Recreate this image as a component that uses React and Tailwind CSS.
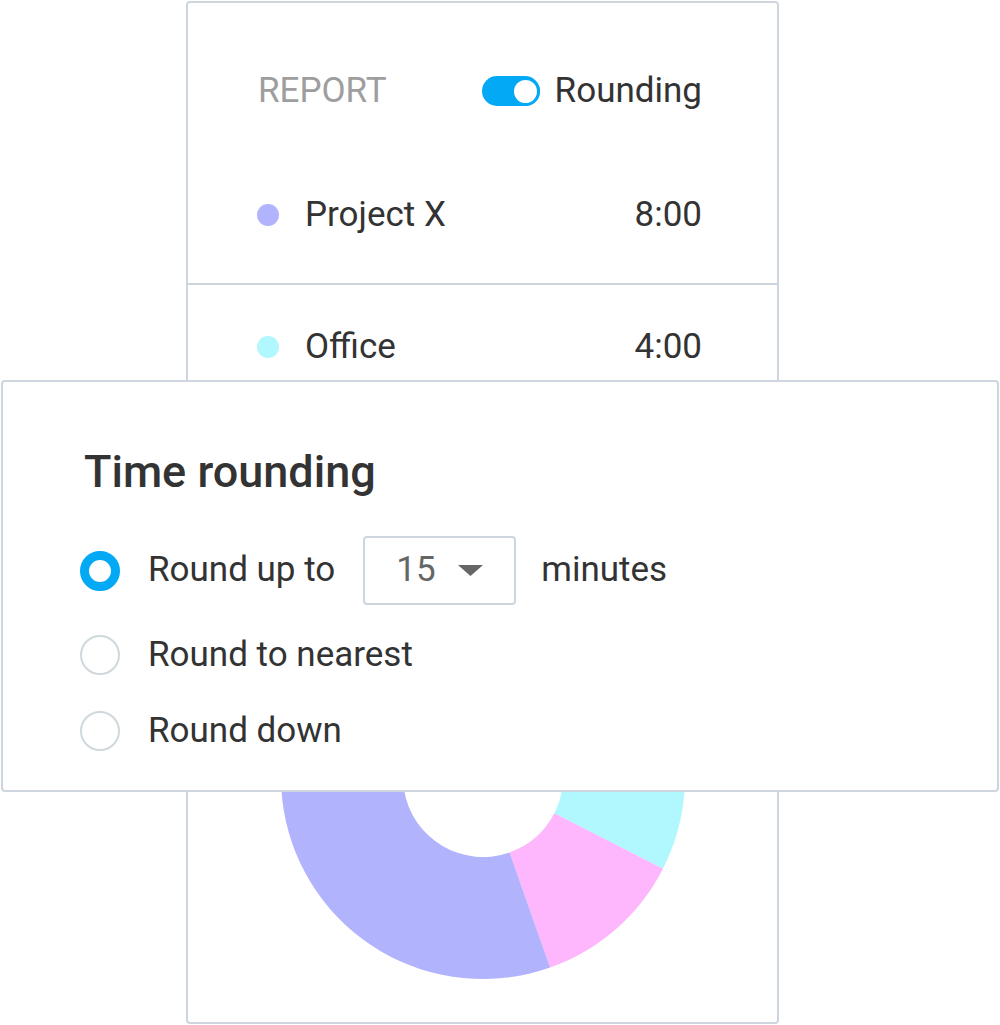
import React from "react";

const R = 202;
const r = 80;

function arc(a0, a1) {
  const rad = (d) => (d * Math.PI) / 180;
  const p = (rr, a) => [R + rr * Math.cos(rad(a)), R + rr * Math.sin(rad(a))];
  const large = a1 - a0 > 180 ? 1 : 0;
  const [x0, y0] = p(R, a0);
  const [x1, y1] = p(R, a1);
  const [x2, y2] = p(r, a1);
  const [x3, y3] = p(r, a0);
  return `M${x0} ${y0} A${R} ${R} 0 ${large} 1 ${x1} ${y1} L${x2} ${y2} A${r} ${r} 0 ${large} 0 ${x3} ${y3} Z`;
}

const segments = [
  { from: -90, to: 27, color: "#b1f7fe" },
  { from: 27, to: 70.6, color: "#feb6fd" },
  { from: 70.6, to: 270, color: "#b1b3fd" },
];

const Dot = ({ color }) => (
  <span className="w-[22px] h-[22px] rounded-full shrink-0" style={{ backgroundColor: color }} />
);

const Radio = ({ checked }) =>
  checked ? (
    <span className="w-[40px] h-[40px] rounded-full border-[9px] border-[#03a9f4] bg-white shrink-0" />
  ) : (
    <span className="w-[40px] h-[40px] rounded-full border-2 border-[#cfd8dc] bg-white shrink-0" />
  );

export default function App() {
  return (
    <div className="relative w-[1000px] h-[1025px] bg-white overflow-hidden font-['Roboto',sans-serif] text-[#333333]">
      {/* report card behind */}
      <div className="ml-[186px] mt-[1px] w-[593px] h-[1023px] border-2 border-[#cdd6de] rounded-[4px] flex flex-col">
        <div className="h-[176px] pl-[70px] pr-[75px] flex items-center justify-between">
          <span className="text-[35px] text-[#9e9e9e]">REPORT</span>
          <div className="flex items-center gap-[15px]">
            <span className="w-[58px] h-[30px] rounded-full bg-[#03a9f4] flex items-center justify-end">
              <span className="w-[29px] h-[29px] rounded-full bg-white border-[3px] border-[#03a9f4]" />
            </span>
            <span className="text-[35px]">Rounding</span>
          </div>
        </div>
        <div className="h-[106px] pb-[32px] pl-[69px] pr-[75px] flex items-center justify-between border-b-2 border-[#cdd6de]">
          <div className="flex items-center gap-[26px]">
            <Dot color="#b1b3fd" />
            <span className="text-[35px]">Project X</span>
          </div>
          <span className="text-[35px]">8:00</span>
        </div>
        <div className="h-[124px] pl-[69px] pr-[75px] flex items-center justify-between">
          <div className="flex items-center gap-[26px]">
            <Dot color="#b1f7fe" />
            <span className="text-[35px]">Office</span>
          </div>
          <span className="text-[35px]">4:00</span>
        </div>
        <div className="mt-[166px] flex justify-center">
          <svg width="404" height="404" viewBox="0 0 404 404">
            {segments.map((s) => (
              <path key={s.color} d={arc(s.from, s.to)} fill={s.color} />
            ))}
          </svg>
        </div>
      </div>

      {/* time rounding popup */}
      <div className="absolute left-[1px] top-[380px] w-[998px] h-[412px] bg-white border-2 border-[#cdd6de] rounded-[4px] pl-[77px] pt-[64px]">
        <h2 className="ml-[4px] text-[45px] leading-[52px] font-medium">Time rounding</h2>
        <div className="mt-[38px] h-[69px] flex items-center">
          <Radio checked />
          <span className="ml-[28px] text-[35px]">Round up to</span>
          <div className="ml-[28px] w-[153px] h-[69px] border-2 border-[#cdd6de] rounded-[4px] flex items-center justify-between pl-[31px] pr-[31px]">
            <span className="text-[35px] text-[#666666]">15</span>
            <svg width="25" height="11" viewBox="0 0 25 11">
              <path d="M0 0 H25 L12.5 11 Z" fill="#666666" />
            </svg>
          </div>
          <span className="ml-[25px] text-[35px]">minutes</span>
        </div>
        <div className="mt-[30px] h-[40px] flex items-center">
          <Radio />
          <span className="ml-[28px] text-[35px]">Round to nearest</span>
        </div>
        <div className="mt-[36px] h-[40px] flex items-center">
          <Radio />
          <span className="ml-[28px] text-[35px]">Round down</span>
        </div>
      </div>
    </div>
  );
}
